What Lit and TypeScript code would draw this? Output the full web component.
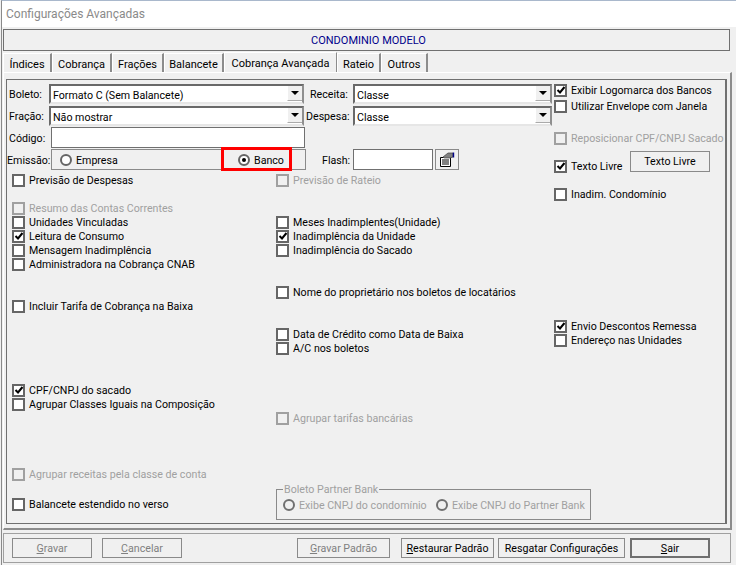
import { LitElement, html, css } from "lit";
import { customElement } from "lit/decorators.js";

type Item = { t: string; r: number; on?: boolean; off?: boolean; cls?: string };

const LEFT: Item[] = [
  { t: "Previsão de Despesas", r: 1 },
  { t: "Resumo das Contas Correntes", r: 3, off: true },
  { t: "Unidades Vinculadas", r: 4 },
  { t: "Leitura de Consumo", r: 5, on: true },
  { t: "Mensagem Inadimplência", r: 6 },
  { t: "Administradora na Cobrança CNAB", r: 7 },
  { t: "Incluir Tarifa de Cobrança na Baixa", r: 10 },
  { t: "CPF/CNPJ do sacado", r: 16, on: true },
  { t: "Agrupar Classes Iguais na Composição", r: 17 },
  { t: "Agrupar receitas pela classe de conta", r: 22, off: true },
  { t: "Balancete estendido no verso", r: 24, cls: "nudge" },
];
const MID: Item[] = [
  { t: "Previsão de Rateio", r: 1, off: true },
  { t: "Meses Inadimplentes(Unidade)", r: 4 },
  { t: "Inadimplência da Unidade", r: 5, on: true },
  { t: "Inadimplência do Sacado", r: 6 },
  { t: "Nome do proprietário nos boletos de locatários", r: 9 },
  { t: "Data de Crédito como Data de Baixa", r: 12 },
  { t: "A/C nos boletos", r: 13 },
  { t: "Agrupar tarifas bancárias", r: 18, off: true },
];

const TABS = ["Índices", "Cobrança", "Frações", "Balancete", "Cobrança Avançada", "Rateio", "Outros"];
const TAB_W = [49, 60, 52, 60, 113, 44, 47];

@customElement("app-root")
export class AppRoot extends LitElement {
  static styles = css`
    :host {
      display: block; width: 736px; height: 565px; overflow: hidden;
      background: #f0f0f0; color: #000;
      font: 10.65px/14px Roboto, sans-serif;
      box-sizing: border-box;
    }
    * { box-sizing: border-box; }
    .title {
      height: 27px; background: #fff; border-top: 1px solid #a9b8cc; color: #8a8a8a; margin-left: 1px;
      border-left: 1px solid #8a8a8a;
      font-size: 12px; line-height: 26px; padding-left: 4px;
    }
    .window { border-left: 1px solid #8a8a8a; margin-left: 1px; height: 538px; padding: 2px 4px 0 0; }
    .head {
      height: 22px; border: 1px solid #707070; color: #00008b; text-align: center; line-height: 22px;
      font-size: 11px; width: 727px; margin-left: 1px; padding-left: 4px;
    }
    .tabs { display: flex; height: 21px; padding: 1px 0 0 1px; align-items: flex-end; }
    .tab {
      height: 19px; border-right: 2px solid #8c8c8c; text-align: center; line-height: 21px;
      border-top: 1px solid #fff; border-left: 1px solid #fff; font-size: 11px;
    }
    .tab.active { height: 20px; border-right: 1px solid #8c8c8c; line-height: 21px; }
    .page {
      height: 458px; width: 729px; margin-left: 1px;
      border-top: 1px solid #fff; border-left: 1px solid #fff;
      border-right: 2px solid #8c8c8c; border-bottom: 2px solid #8c8c8c;
      padding: 6px 0 0 2px;
    }
    .panel {
      height: 445px; width: 721px; border: 1px solid #707070; border-right-width: 2px;
      display: flex; padding-top: 4px;
    }
    .main { width: 547px; padding-left: 1px; }
    .row { display: flex; align-items: flex-start; }
    .row.h22 { height: 22px; }
    .row.h21 { height: 21px; }
    .lbl { width: 41px; padding-left: 1px; flex: none; line-height: 22px; }
    .tall .lbl, .tall .flash { line-height: 23px; }
    .lbl.em { margin-left: -1px; width: 42px; padding-left: 0; }
    .select {
      height: 20px; border: 2px solid; border-color: #696969 #8f8f8f #e6e6e6 #696969; background: #fff;
      display: flex; justify-content: space-between; padding-left: 2px; line-height: 19px; flex: none;
    }
    .select.a { width: 255px; }
    .select.b { width: 199px; }
    .arrow {
      width: 15px; height: 15px; background: #f0f0f0; display: flex; align-items: center; justify-content: center;
      border-left: 1px solid #fff; border-bottom: 1px solid #aaa;
    }
    .arrow::after { content: ""; border: 4px solid transparent; border-top: 4px solid #000; border-bottom: 0; }
    .lbl2 { width: 49px; flex: none; padding-left: 6px; line-height: 22px; }
    .lbl2.d { padding-left: 2px; }
    .input { width: 254px; height: 21px; border: 1px solid #707070; background: #fff; margin-left: 2px; }
    .box {
      width: 255px; height: 21px; border: 1px solid #8a8a8a; margin-left: 2px; position: relative;
      display: flex; align-items: center; padding-left: 8px;
    }
    .radio { display: flex; align-items: center; gap: 4px; white-space: nowrap; }
    .radio.w178 { width: 178px; }
    .dot {
      width: 12px; height: 12px; border-radius: 50%; border: 2px solid #666; background: #fff; flex: none;
      display: flex; align-items: center; justify-content: center;
    }
    .dot.on::after { content: ""; width: 4px; height: 4px; border-radius: 50%; background: #000; }
    .red { position: absolute; left: 169px; top: -3px; width: 71px; height: 24px; border: 3px solid #f00; }
    .flash { margin-left: 16px; width: 31px; flex: none; }
    .flashin { width: 80px; height: 21px; border: 1px solid #707070; background: #fff; flex: none; }
    .iconbtn {
      width: 24px; height: 21px; border: 1px solid #8a8a8a; margin-left: 2px; display: flex; align-items: center; justify-content: center; flex: none;
    }
    .grid {
      display: grid; grid-template-columns: 264px 1fr; grid-auto-rows: 14px; margin-top: 3px; padding-left: 4px;
    }
    .col1 { grid-column: 1; }
    .col2 { grid-column: 2; }
    .chk { display: flex; align-items: center; gap: 4px; white-space: nowrap; height: 14px; }
    .tx { margin-top: 2px; }
    .chk.off { color: #a0a0a0; }
    .nudge { margin-top: 2px; }
    .cb {
      width: 13px; height: 13px; border: 2px solid #666; background: #fff; flex: none; position: relative;
    }
    .off .cb { border-color: #a0a0a0; background: #f0f0f0; }
    .cb svg { position: absolute; left: -0.5px; top: -0.5px; }
    .side { width: 170px; display: flex; flex-direction: column; margin-top: -1px; }
    .m2 { margin-top: 2px; }
    .m3 { margin-top: 18px; }
    .m4 { margin-top: 6px; }
    .m5 { margin-top: 14px; }
    .m6 { margin-top: 118px; }
    .tl { display: flex; align-items: flex-start; }
    .tl .chk { margin-top: 8px; width: 76px; }
    .tlbtn {
      width: 80px; height: 21px; border: 1px solid #8a8a8a; text-align: center; line-height: 19px;
    }
    .group {
      grid-column: 2; grid-row: 23 / span 3; margin-top: 8px; width: 315px; height: 31px;
      border: 1px solid #8a8a8a; position: relative; color: #a0a0a0; display: flex; align-items: center;
      padding-left: 6px;
    }
    .group .legend { position: absolute; left: 6px; top: -7px; background: #f0f0f0; padding: 0 1px; }
    .group .radio { margin-top: 1px; }
    .group .radio.first { width: 153px; }
    .group .dot { background: #f0f0f0; border-color: #707070; }
    .footer {
      width: 728px; height: 30px; margin: 3px 0 0 1px; border: 1px solid #a0a0a0;
      display: flex; align-items: center; padding-left: 8px;
    }
    .btn {
      height: 20px; border: 1px solid #8a8a8a; text-align: center; line-height: 20px; white-space: nowrap; flex: none;
    }
    .btn.dis { color: #808080; }
    .btn u { text-underline-offset: 1px; }
    .w80 { width: 80px; }
    .w93 { width: 93px; }
    .w127 { width: 127px; }
    .ml10 { margin-left: 10px; }
    .ml115 { margin-left: 115px; }
    .ml11 { margin-left: 11px; }
    .ml4 { margin-left: 4px; }
    .ml5 { margin-left: 5px; }
    .sair { border: 2px solid #707070; line-height: 18px; }
  `;

  private chk(i: Item, col?: string) {
    return html`<label
      class="chk ${i.off ? "off" : ""} ${i.cls ?? ""} ${col ?? ""}"
      style="grid-row:${i.r}"
    >
      <span class="cb">${i.on ? html`<svg width="10" height="10" viewBox="0 0 10 10"><path d="M1.5 5 L4 7.5 L8.5 2" fill="none" stroke="#000" stroke-width="2"/></svg>` : ""}</span><span class="tx">${i.t}</span>
    </label>`;
  }

  render() {
    return html`
      <div class="title">Configurações Avançadas</div>
      <div class="window">
        <div class="head">CONDOMINIO MODELO</div>
        <div class="tabs">
          ${TABS.map((t, i) => html`<div class="tab ${i === 4 ? "active" : ""}" style="width:${TAB_W[i]}px">${t}</div>`)}
        </div>
        <div class="page">
          <div class="panel">
            <div class="main">
              <div class="row h22">
                <span class="lbl">Boleto:</span>
                <div class="select a"><span>Formato C (Sem Balancete)</span><span class="arrow"></span></div>
                <span class="lbl2">Receita:</span>
                <div class="select b"><span>Classe</span><span class="arrow"></span></div>
              </div>
              <div class="row h21">
                <span class="lbl">Fração:</span>
                <div class="select a"><span>Não mostrar</span><span class="arrow"></span></div>
                <span class="lbl2 d">Despesa:</span>
                <div class="select b"><span>Classe</span><span class="arrow"></span></div>
              </div>
              <div class="row h22 tall">
                <span class="lbl">Código:</span>
                <div class="input"></div>
              </div>
              <div class="row h21 tall">
                <span class="lbl em">Emissão:</span>
                <div class="box">
                  <span class="radio w178"><span class="dot"></span><span class="tx">Empresa</span></span>
                  <span class="radio"><span class="dot on"></span><span class="tx">Banco</span></span>
                  <span class="red"></span>
                </div>
                <span class="flash">Flash:</span>
                <div class="flashin"></div>
                <div class="iconbtn">
                  <svg width="18" height="17" viewBox="0 0 18 17">
                    <path d="M2.5 6.5h10v9h-10z" fill="#fff" stroke="#000"/>
                    <path d="M4 9h7M4 11h7M4 13h7" stroke="#000"/>
                    <path d="M5 6l5-4h5v4l-3 1H6z" fill="#808080" stroke="#404040" stroke-width=".7"/>
                    <path d="M15.5 1.5v5" stroke="#00008b" stroke-width="1.4"/>
                  </svg>
                </div>
              </div>
              <div class="grid">
                ${LEFT.map((i) => this.chk(i, "col1"))}
                ${MID.map((i) => this.chk(i, "col2"))}
                <div class="group">
                  <span class="legend">Boleto Partner Bank</span>
                  <span class="radio first"><span class="dot"></span><span class="tx">Exibe CNPJ do condomínio</span></span>
                  <span class="radio"><span class="dot"></span><span class="tx">Exibe CNPJ do Partner Bank</span></span>
                </div>
              </div>
            </div>
            <div class="side">
              ${this.chk({ t: "Exibir Logomarca dos Bancos", r: 0, on: true })}
              ${this.chk({ t: "Utilizar Envelope com Janela", r: 0, cls: "m2" })}
              ${this.chk({ t: "Reposicionar CPF/CNPJ Sacado", r: 0, off: true, cls: "m3" })}
              <div class="tl m4">
                ${this.chk({ t: "Texto Livre", r: 0, on: true })}
                <div class="tlbtn">Texto Livre</div>
              </div>
              ${this.chk({ t: "Inadim. Condomínio", r: 0, cls: "m5" })}
              ${this.chk({ t: "Envio Descontos Remessa", r: 0, on: true, cls: "m6" })}
              ${this.chk({ t: "Endereço nas Unidades", r: 0 })}
            </div>
          </div>
        </div>
        <div class="footer">
          <div class="btn dis w80"><u>G</u>ravar</div>
          <div class="btn dis w80 ml10"><u>C</u>ancelar</div>
          <div class="btn dis w93 ml115"><u>G</u>ravar Padrão</div>
          <div class="btn w93 ml11"><u>R</u>estaurar Padrão</div>
          <div class="btn w127 ml4">Resgatar Configurações</div>
          <div class="btn sair w80 ml5"><u>S</u>air</div>
        </div>
      </div>
    `;
  }
}
